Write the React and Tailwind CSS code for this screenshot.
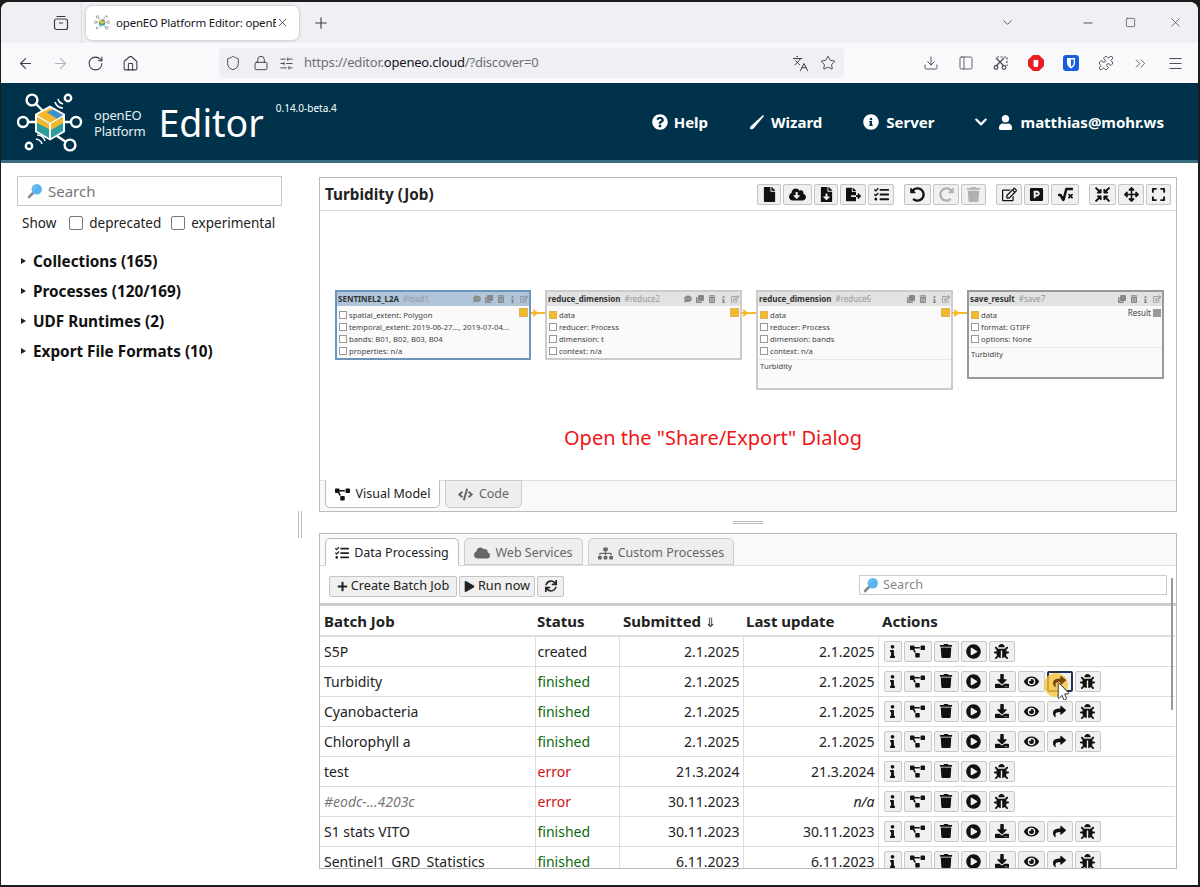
import React from 'react';
import { ArrowLeft, ArrowRight, RotateCw, Home, Shield, Lock, SlidersHorizontal, Languages, Star, Download, PanelLeft, Puzzle, ChevronsRight, Menu, Minus, Square, X, ChevronDown, Plus } from 'lucide-react';
import {
  FaFile, FaCloudDownloadAlt, FaFileDownload, FaFileExport, FaTasks, FaUndoAlt, FaRedoAlt, FaTrash, FaTrashAlt, FaRegEdit, FaParking, FaSquareRootAlt,
  FaCompressArrowsAlt, FaArrowsAlt, FaExpand, FaProjectDiagram, FaCode, FaCloud, FaSitemap, FaQuestionCircle, FaInfoCircle, FaChevronDown, FaUser,
  FaInfo, FaPlayCircle, FaDownload, FaEye, FaShare, FaBug, FaPlus, FaPlay, FaSync, FaCommentDots, FaClone, FaMousePointer
} from 'react-icons/fa';

function Logo({ className, ring = '#ffffff' }) {
  return (
    <svg viewBox="0 0 66 66" className={className} fill="none">
      <g stroke={ring} strokeWidth="2.4">
        <circle cx="15" cy="8" r="5.4" />
        <circle cx="6" cy="30" r="5" />
        <circle cx="59" cy="30" r="5" />
        <circle cx="53" cy="53" r="5.4" />
        <circle cx="51" cy="6" r="3.2" />
        <circle cx="12" cy="54" r="3.2" />
        <path d="M19 12l7 7M11 30h7M48 30h6M40 44l9 6" />
        <path d="M41 7q1 4 5 5M38 10q2 6 8 6M25 52q-1-4-6-5M28 49q-2-6-8-6" strokeWidth="1.6" />
      </g>
      <path d="M33 13.500l15 8.500v18l-15 8.500-15-8.500V22z" fill="#fff" />
      <path d="M33 16l13 7-13 8-13-8z" fill="#f5b72b" />
      <path d="M36 17.500l10 5.500-6 3.700-10-6.500z" fill="#3c8fd0" />
      <path d="M20 25l12 7v14l-12-7z" fill="#2a9d9c" />
      <path d="M20 25l12 7v5l-12-6z" fill="#f5b72b" />
      <path d="M34 32l12-7v14l-12 7z" fill="#2a9d9c" />
      <path d="M34 32l12-7v6l-12 7z" fill="#f5b72b" />
    </svg>
  );
}

function SearchGlyph() {
  return (
    <svg viewBox="0 0 16 16" className="w-4 h-4 shrink-0">
      <path d="M6 10L2 14" stroke="#8a8a8a" strokeWidth="2.6" strokeLinecap="round" />
      <circle cx="9.8" cy="6.2" r="5.2" fill="#5ab4ee" />
      <path d="M6.4 6.4a3.4 3.4 0 0 1 3-3.2" stroke="#8ac9f3" strokeWidth="1" fill="none" />
    </svg>
  );
}

function BrowserChrome() {
  const left = [
    [ArrowLeft, 'text-[#3b3b45]'],
    [ArrowRight, 'text-[#b4b4ba]'],
    [RotateCw, 'text-[#3b3b45]'],
    [Home, 'text-[#3b3b45]'],
  ];
  return (
    <div className="shrink-0">
      <div className="h-[41px] bg-[#f0f0f4] flex items-center rounded-t-lg">
        <div className="w-[80px] flex justify-end pr-[12px]">
          <svg viewBox="0 0 16 16" className="w-4 h-4 text-[#3b3b45]" fill="none" stroke="currentColor" strokeWidth="1.2">
            <path d="M3.500 1.500h9" />
            <rect x="1.500" y="4" width="13" height="10.500" rx="2" />
            <path d="M6 8h4" />
          </svg>
        </div>
        <div className="w-px h-[41px] bg-[#dcdce0]" />
        <div className="ml-[4px] w-[213px] h-[34px] bg-white rounded-md shadow-[0_0_3px_rgba(0,0,0,0.3)] flex items-center pl-[8px] pr-[10px]">
          <Logo className="w-4 h-4 shrink-0" ring="#5a6a7a" />
          <span className="ml-[6px] text-[11.500px] tracking-[-0.2px] text-[#15141a] whitespace-nowrap overflow-hidden w-[160px]">openEO Platform Editor: openEO</span>
          <X size={13} strokeWidth={1.5} className="ml-auto shrink-0 text-[#3b3b45]" />
        </div>
        <Plus size={18} strokeWidth={1.5} className="ml-[13px] text-[#3b3b45]" />
        <div className="ml-auto flex items-center text-[#3b3b45]">
          <ChevronDown size={15} strokeWidth={1.25} className="mr-[66px]" />
          <Minus size={14} strokeWidth={1.5} className="mr-[30px]" />
          <Square size={11} strokeWidth={1.5} className="mr-[32px]" />
          <X size={15} strokeWidth={1.1} className="mr-[15px]" />
        </div>
      </div>
      <div className="h-[40px] bg-[#f9f9fb] flex items-center pl-[7px]">
        {left.map(([Icon, color], i) => (
          <div key={i} className="w-[35px] flex justify-center">
            <Icon size={17} strokeWidth={1.5} className={color} />
          </div>
        ))}
        <div className="ml-[71px] w-[625px] h-[30px] bg-[#f0f0f4] rounded flex items-center pl-[6px] pr-[8px] text-[#3b3b45]">
          <Shield size={16} strokeWidth={1.4} />
          <Lock size={16} strokeWidth={1.4} className="ml-[12px]" />
          <SlidersHorizontal size={15} strokeWidth={1.4} className="ml-[10px]" />
          <span className="ml-[10px] text-[13px] tracking-[-0.2px] text-[#6e6e78] whitespace-nowrap">https://editor.<span className="text-[#15141a]">openeo.cloud</span>/?discover=0</span>
          <Languages size={17} strokeWidth={1.4} className="ml-auto" />
          <Star size={16} strokeWidth={1.4} className="ml-[11px]" />
        </div>
        <div className="ml-auto flex items-center pr-[5px] text-[#4a4a52]">
          <div className="w-[35px] flex justify-center"><Download size={16} strokeWidth={1.4} /></div>
          <div className="w-[35px] flex justify-center"><PanelLeft size={16} strokeWidth={1.3} /></div>
          <div className="w-[35px] flex justify-center">
            <svg viewBox="0 0 16 16" className="w-4 h-4" fill="none" stroke="currentColor">
              <path d="M4 2h10v9" strokeWidth="1.2" strokeDasharray="2 1.500" />
              <path d="M3 3l8 8M11 3l-8 8" strokeWidth="1.3" />
              <circle cx="3" cy="12.500" r="1.800" strokeWidth="1.200" />
              <circle cx="11" cy="12.500" r="1.800" strokeWidth="1.200" />
            </svg>
          </div>
          <div className="w-[35px] flex justify-center">
            <svg viewBox="0 0 16 16" className="w-4 h-4"><path d="M5 0h6l5 5v6l-5 5H5l-5-5V5z" fill="#ea1c24" /><path d="M5.500 11V5.500a.8.8 0 0 1 1.600 0 .8.8 0 0 1 1.600 0 .8.8 0 0 1 1.600 0V9l-.6 3H7z" fill="#fff" /></svg>
          </div>
          <div className="w-[35px] flex justify-center">
            <svg viewBox="0 0 16 16" className="w-4 h-4"><rect width="16" height="16" rx="3" fill="#175ddc" /><path d="M4 3h8v5c0 3-2 4-4 5.400C6 12 4 11 4 8z" fill="#fff" /><path d="M8 4.400h2.600V8c0 1.800-1.300 2.800-2.600 3.600z" fill="#175ddc" /></svg>
          </div>
          <div className="w-[35px] flex justify-center"><Puzzle size={16} strokeWidth={1.4} /></div>
          <div className="w-[35px] flex justify-center"><ChevronsRight size={17} strokeWidth={1.2} /></div>
          <div className="w-[35px] flex justify-center"><Menu size={17} strokeWidth={1.4} /></div>
        </div>
      </div>
    </div>
  );
}

function AppHeader() {
  return (
    <header className="h-[80px] shrink-0 bg-[#00334b] border-b-[3px] border-[#3a6c80] flex text-white">
      <Logo className="ml-[16px] mt-[9px] w-[66px] h-[66px]" />
      <div className="ml-[11px] mt-[24px] text-[13px] leading-[16px] text-[#e6eef2] tracking-[-0.2px]">
        <div>openEO</div>
        <div>Platform</div>
      </div>
      <div className="ml-[13px] mt-[13px] text-[37.500px] leading-[54px]">Editor</div>
      <div className="ml-[12px] mt-[18px] text-[10px] leading-[14px] self-start">0.14.0-beta.4</div>
      <nav className="ml-auto mr-[34px] flex items-center h-[78px] text-[15px] font-bold">
        <FaQuestionCircle size={16} />
        <span className="ml-[6px]">Help</span>
        <svg viewBox="0 0 16 16" className="ml-[41px] w-4 h-4"><path d="M14 1l1 1-10 12q-2 2-3.500 1t.5-3z" fill="#fff" /></svg>
        <span className="ml-[6px]">Wizard</span>
        <FaInfoCircle size={16} className="ml-[41px]" />
        <span className="ml-[7px]">Server</span>
        <FaChevronDown size={14} className="ml-[39px]" />
        <FaUser size={15} className="ml-[10px]" />
        <span className="ml-[8px]">matthias@mohr.ws</span>
      </nav>
    </header>
  );
}

function Sidebar() {
  const items = ['Collections (165)', 'Processes (120/169)', 'UDF Runtimes (2)', 'Export File Formats (10)'];
  return (
    <aside className="w-[299px] shrink-0 pl-[16px] pr-[18px] pt-[13px]">
      <div className="h-[30px] border border-[#c8c8c8] flex items-center pl-[9px] text-[15px] text-[#777] gap-[5px]">
        <SearchGlyph />
        Search
      </div>
      <div className="mt-[7px] h-[20px] flex items-center pl-[5px] text-[13.500px] text-[#222]">
        Show
        <span className="ml-[13px] w-[14px] h-[14px] border border-[#777] rounded-[2px]" />
        <span className="ml-[6px]">deprecated</span>
        <span className="ml-[10px] w-[14px] h-[14px] border border-[#777] rounded-[2px]" />
        <span className="ml-[6px]">experimental</span>
      </div>
      <div className="mt-[13px]">
        {items.map(t => (
          <div key={t} className="h-[30px] flex items-center text-[15.300px] font-bold text-[#111]">
            <span className="ml-[4px] w-0 h-0 border-y-[3px] border-y-transparent border-l-[5px] border-l-[#222]" />
            <span className="ml-[7px]">{t}</span>
          </div>
        ))}
      </div>
    </aside>
  );
}

function ToolBtn({ w, icon: Icon, size = 15, faded }) {
  return (
    <button className={`${w} h-[21px] bg-[#f0f0f0] border border-[#c4c4c4] rounded-[2px] flex items-center justify-center ${faded ? 'text-[#b0b0b0]' : 'text-[#111]'}`}>
      <Icon size={size} />
    </button>
  );
}

function Node({ pos, sel, title, id, params, note, comment, output, outLabel }) {
  return (
    <div className={`absolute ${pos} bg-[#fafafa] border-2 ${sel === 'blue' ? 'border-[#6d94ba]' : sel === 'gray' ? 'border-[#999]' : 'border-[#ccc]'}`}>
      <div className={`h-[14px] flex items-center pl-[1px] pr-[1px] text-[8px] ${sel === 'blue' ? 'bg-[#b0c4da]' : 'bg-[#e2e2e2]'}`}>
        <b className="text-[#333]">{title}</b>
        <span className="ml-[4px] text-[#999]">{id}</span>
        <div className="ml-auto flex items-center gap-[4px] text-[#888]">
          {comment && <FaCommentDots size={8} />}
          <FaClone size={8} />
          <FaTrashAlt size={8} />
          <FaInfo size={7} />
          <FaRegEdit size={8} />
        </div>
      </div>
      <div className="pt-[3px] relative">
        {params.map((p, i) => (
          <div key={p} className="h-[12px] flex items-center pl-[2px] text-[7.700px] leading-[12px] text-[#444] whitespace-nowrap">
            <span className={`w-[8px] h-[8px] mr-[2px] shrink-0 border ${i === 0 && p === 'data' ? 'bg-[#f3b82c] border-[#d9b45a]' : 'bg-white border-[#999]'}`} />
            {p}
          </div>
        ))}
        {output && <span className="absolute right-[1px] top-[2px] w-[9px] h-[9px] bg-[#f3b82c] border border-[#d9b45a]" />}
        {outLabel && (
          <div className="absolute right-[1px] top-[1px] flex items-center gap-[2px] text-[8px] text-[#444]">
            {outLabel}
            <span className="w-[8px] h-[8px] bg-[#999]" />
          </div>
        )}
        {note && <div className="mt-[2px] border-t border-[#e8e8e8] pl-[2px] text-[7.700px] leading-[12px] text-[#444]">{note}</div>}
      </div>
    </div>
  );
}

function Edge({ pos }) {
  return (
    <svg viewBox="0 0 16 8" className={`absolute ${pos} w-[16px] h-[8px]`}>
      <path d="M0 4h15" stroke="#f3b82c" strokeWidth="2" />
      <path d="M2 1l4 3-4 3" stroke="#f3b82c" strokeWidth="2" fill="none" />
    </svg>
  );
}

function ModelPanel() {
  const groups = [
    [['w-[24px]', FaFile], ['w-[29px]', FaCloudDownloadAlt, 17], ['w-[24px]', FaFileDownload], ['w-[26px]', FaFileExport], ['w-[26px]', FaTasks]],
    [['w-[27px]', FaUndoAlt], ['w-[26px]', FaRedoAlt, 15, true], ['w-[25px]', FaTrash, 15, true]],
    [['w-[26px]', FaRegEdit], ['w-[25px]', FaParking], ['w-[28px]', FaSquareRootAlt]],
    [['w-[27px]', FaCompressArrowsAlt], ['w-[26px]', FaArrowsAlt], ['w-[25px]', FaExpand]],
  ];
  return (
    <section className="h-[335px] shrink-0 border border-[#bbb] flex flex-col">
      <div className="h-[33px] shrink-0 border-b border-[#ddd] flex items-center pl-[5px] pr-[5px]">
        <h2 className="text-[15.300px] font-bold text-[#222]">Turbidity (Job)</h2>
        <div className="ml-auto flex gap-[10px]">
          {groups.map((g, i) => (
            <div key={i} className="flex gap-[2px]">
              {g.map(([w, icon, size, faded], j) => <ToolBtn key={j} w={w} icon={icon} size={size} faded={faded} />)}
            </div>
          ))}
        </div>
      </div>
      <div className="relative flex-1">
        <Node pos="left-[15px] top-[79px] w-[196px] h-[70px]" sel="blue" title="SENTINEL2_L2A" id="#load1" comment output
          params={['spatial_extent: Polygon', 'temporal_extent: 2019-06-27..., 2019-07-04...', 'bands: B01, B02, B03, B04', 'properties: n/a']} />
        <Edge pos="left-[211px] top-[98px]" />
        <Node pos="left-[225px] top-[79px] w-[197px] h-[70px]" title="reduce_dimension" id="#reduce2" comment output
          params={['data', 'reducer: Process', 'dimension: t', 'context: n/a']} />
        <Edge pos="left-[421px] top-[98px]" />
        <Node pos="left-[436px] top-[79px] w-[197px] h-[100px]" title="reduce_dimension" id="#reduce6" output note="Turbidity"
          params={['data', 'reducer: Process', 'dimension: bands', 'context: n/a']} />
        <Edge pos="left-[632px] top-[98px]" />
        <Node pos="left-[647px] top-[79px] w-[197px] h-[89px]" sel="gray" title="save_result" id="#save7" outLabel="Result" note="Turbidity"
          params={['data', 'format: GTIFF', 'options: None']} />
        <p className="absolute left-[244px] top-[212px] text-[20px] leading-[30px] text-[#f01414] whitespace-nowrap">Open the "Share/Export" Dialog</p>
      </div>
      <div className="h-[31px] shrink-0 bg-[#f9f9f9] border-t border-[#ddd] flex items-start pl-[5px] gap-[5px] text-[12.500px]">
        <div className="-mt-px h-[28px] w-[115px] bg-white border border-t-white border-[#bbb] rounded-b-[5px] flex items-center justify-center gap-[6px] text-[#222]">
          <FaProjectDiagram size={15} className="text-[#111]" /> Visual Model
        </div>
        <div className="-mt-px h-[28px] w-[77px] bg-[#eee] border border-[#ccc] rounded-b-[5px] flex items-center justify-center gap-[6px] text-[#666]">
          <FaCode size={15} /> Code
        </div>
      </div>
    </section>
  );
}

const base = [
  ['w-[18px]', FaInfo, 13],
  ['w-[28px]', FaProjectDiagram, 15],
  ['w-[25px]', FaTrash, 14],
  ['w-[26px]', FaPlayCircle, 15],
];
const dl = ['w-[27px]', FaDownload, 14];
const eye = ['w-[27px]', FaEye, 15];
const share = ['w-[26px]', FaShare, 13];
const bug = ['w-[26px]', FaBug, 15];

const rows = [
  ['S5P', 'created', '2.1.2025', '2.1.2025', false],
  ['Turbidity', 'finished', '2.1.2025', '2.1.2025', true, true],
  ['Cyanobacteria', 'finished', '2.1.2025', '2.1.2025', true],
  ['Chlorophyll a', 'finished', '2.1.2025', '2.1.2025', true],
  ['test', 'error', '21.3.2024', '21.3.2024', false],
  ['#eodc-...4203c', 'error', '30.11.2023', 'n/a', false],
  ['S1 stats VITO', 'finished', '30.11.2023', '30.11.2023', true],
  ['Sentinel1_GRD_Statistics', 'finished', '6.11.2023', '6.11.2023', true],
];

function ActionBtn({ w, icon: Icon, size, active }) {
  return (
    <button className={`relative ${w} h-[21px] rounded-[2px] flex items-center justify-center text-[#111] bg-[#f0f0f0] ${active ? 'border-2 border-[#1f3550]' : 'border border-[#c8c8c8]'}`}>
      {active && <span className="absolute -left-[5px] top-0 w-[24px] h-[24px] rounded-full bg-[#f8c53a]/80" />}
      <Icon size={size} className={`relative ${active ? 'text-[#7a4a10]' : ''}`} />
      {active && <FaMousePointer size={17} className="absolute left-[6px] top-[10px] text-white stroke-[#333] stroke-[30px]" />}
    </button>
  );
}

function JobsPanel() {
  const statusColor = { created: 'text-[#222]', finished: 'text-[#0a6a0a]', error: 'text-[#d01010]' };
  return (
    <section className="relative h-[336px] shrink-0 border border-[#bbb] flex flex-col overflow-hidden">
      <div className="h-[32px] shrink-0 border-b border-[#ddd] bg-[#f9f9f9] flex items-end pl-[5px] gap-[5px] text-[12.500px]">
        <div className="-mb-px h-[28px] w-[134px] pt-[2px] bg-white border border-b-white border-[#bbb] rounded-t-[5px] flex items-center justify-center gap-[5px] text-[#222]">
          <FaTasks size={14} /> Data Processing
        </div>
        <div className="h-[27px] w-[119px] pt-[3px] bg-[#eee] border border-[#ccc] rounded-t-[5px] flex items-center justify-center gap-[5px] text-[#666]">
          <FaCloud size={16} /> Web Services
        </div>
        <div className="h-[27px] w-[146px] pt-[3px] bg-[#eee] border border-[#ccc] rounded-t-[5px] flex items-center justify-center gap-[5px] text-[#666]">
          <FaSitemap size={15} /> Custom Processes
        </div>
      </div>
      <div className="h-[37px] shrink-0 flex items-center pl-[9px] pr-[9px] text-[12.700px] text-[#222]">
        <button className="mt-[3px] w-[128px] h-[21px] bg-[#f0f0f0] border border-[#c4c4c4] rounded-[2px] flex items-center justify-center gap-[3px]"><FaPlus size={11} />Create Batch Job</button>
        <button className="mt-[3px] ml-[2px] w-[76px] h-[21px] bg-[#f0f0f0] border border-[#c4c4c4] rounded-[2px] flex items-center justify-center gap-[3px]"><FaPlay size={11} />Run now</button>
        <button className="mt-[3px] ml-[2px] w-[27px] h-[21px] bg-[#f0f0f0] border border-[#c4c4c4] rounded-[2px] flex items-center justify-center"><FaSync size={12} /></button>
        <div className="ml-auto w-[308px] h-[20px] border border-[#ccc] flex items-center pl-[3px] gap-[4px] text-[#888]"><SearchGlyph />Search</div>
      </div>
      <div className="flex-1 min-h-0 overflow-hidden border-t-[3px] border-[#ccc]">
        <table className="w-[855px] table-fixed border-collapse text-[14px] text-[#222]">
          <colgroup>
            <col className="w-[215px]" />
            <col className="w-[84px]" />
            <col className="w-[124px]" />
            <col className="w-[135px]" />
            <col />
          </colgroup>
          <thead>
            <tr className="h-[30px] text-[15px] text-left border-b-2 border-[#ddd]">
              <th className="pl-[4px] pt-[2px] font-bold">Batch Job</th>
              <th className="pl-[2px] pt-[2px] font-bold">Status</th>
              <th className="pl-[4px] pt-[2px] font-bold">Submitted <span className="font-normal text-[13px]">⇓</span></th>
              <th className="pl-[3px] pt-[2px] font-bold">Last update</th>
              <th className="pl-[4px] pt-[2px] font-bold">Actions</th>
            </tr>
          </thead>
          <tbody>
            {rows.map(r => (
              <tr key={r[0]} className="h-[30px] border-b border-[#ddd]">
                <td className={`pl-[4px] whitespace-nowrap ${r[0].startsWith('#') ? 'italic text-[#777]' : ''}`}>{r[0]}</td>
                <td className={`pl-[2px] border-l border-[#ddd] ${statusColor[r[1]]}`}>{r[1]}</td>
                <td className="pr-[3px] text-right border-l border-[#ddd]">{r[2]}</td>
                <td className={`pr-[3px] text-right border-l border-[#ddd] ${r[3] === 'n/a' ? 'italic' : ''}`}>{r[3]}</td>
                <td className="pl-[5px] border-l border-[#ddd]">
                  <div className="flex gap-[2px]">
                    {base.map(([w, icon, size], i) => <ActionBtn key={i} w={w} icon={icon} size={size} />)}
                    {r[4] && <ActionBtn w={dl[0]} icon={dl[1]} size={dl[2]} />}
                    {r[4] && <ActionBtn w={eye[0]} icon={eye[1]} size={eye[2]} />}
                    {r[4] && <ActionBtn w={share[0]} icon={share[1]} size={share[2]} active={r[5]} />}
                    <ActionBtn w={bug[0]} icon={bug[1]} size={bug[2]} />
                  </div>
                </td>
              </tr>
            ))}
          </tbody>
        </table>
      </div>
      <span className="absolute right-[3px] top-[44px] w-[2px] h-[132px] bg-[#999]" />
    </section>
  );
}

export default function App() {
  return (
    <div className="w-[1200px] h-[887px] bg-[#1c1c1c] pt-[2px] pl-px pr-[2px] pb-[2px] overflow-hidden font-['Noto_Sans',sans-serif]">
      <div className="h-full bg-white flex flex-col rounded-t-lg overflow-hidden">
        <BrowserChrome />
        <AppHeader />
        <main className="flex-1 min-h-0 flex">
          <Sidebar />
          <div className="w-[19px] shrink-0 flex items-center">
            <div className="-ml-[2px] w-[4px] h-[27px] border-x border-[#bbb]" />
          </div>
          <div className="w-[858px] shrink-0 pt-[14px] flex flex-col">
            <ModelPanel />
            <div className="h-[21px] shrink-0 flex items-center justify-center">
              <div className="w-[30px] h-[3px] border-y border-[#bbb]" />
            </div>
            <JobsPanel />
          </div>
        </main>
      </div>
    </div>
  );
}
